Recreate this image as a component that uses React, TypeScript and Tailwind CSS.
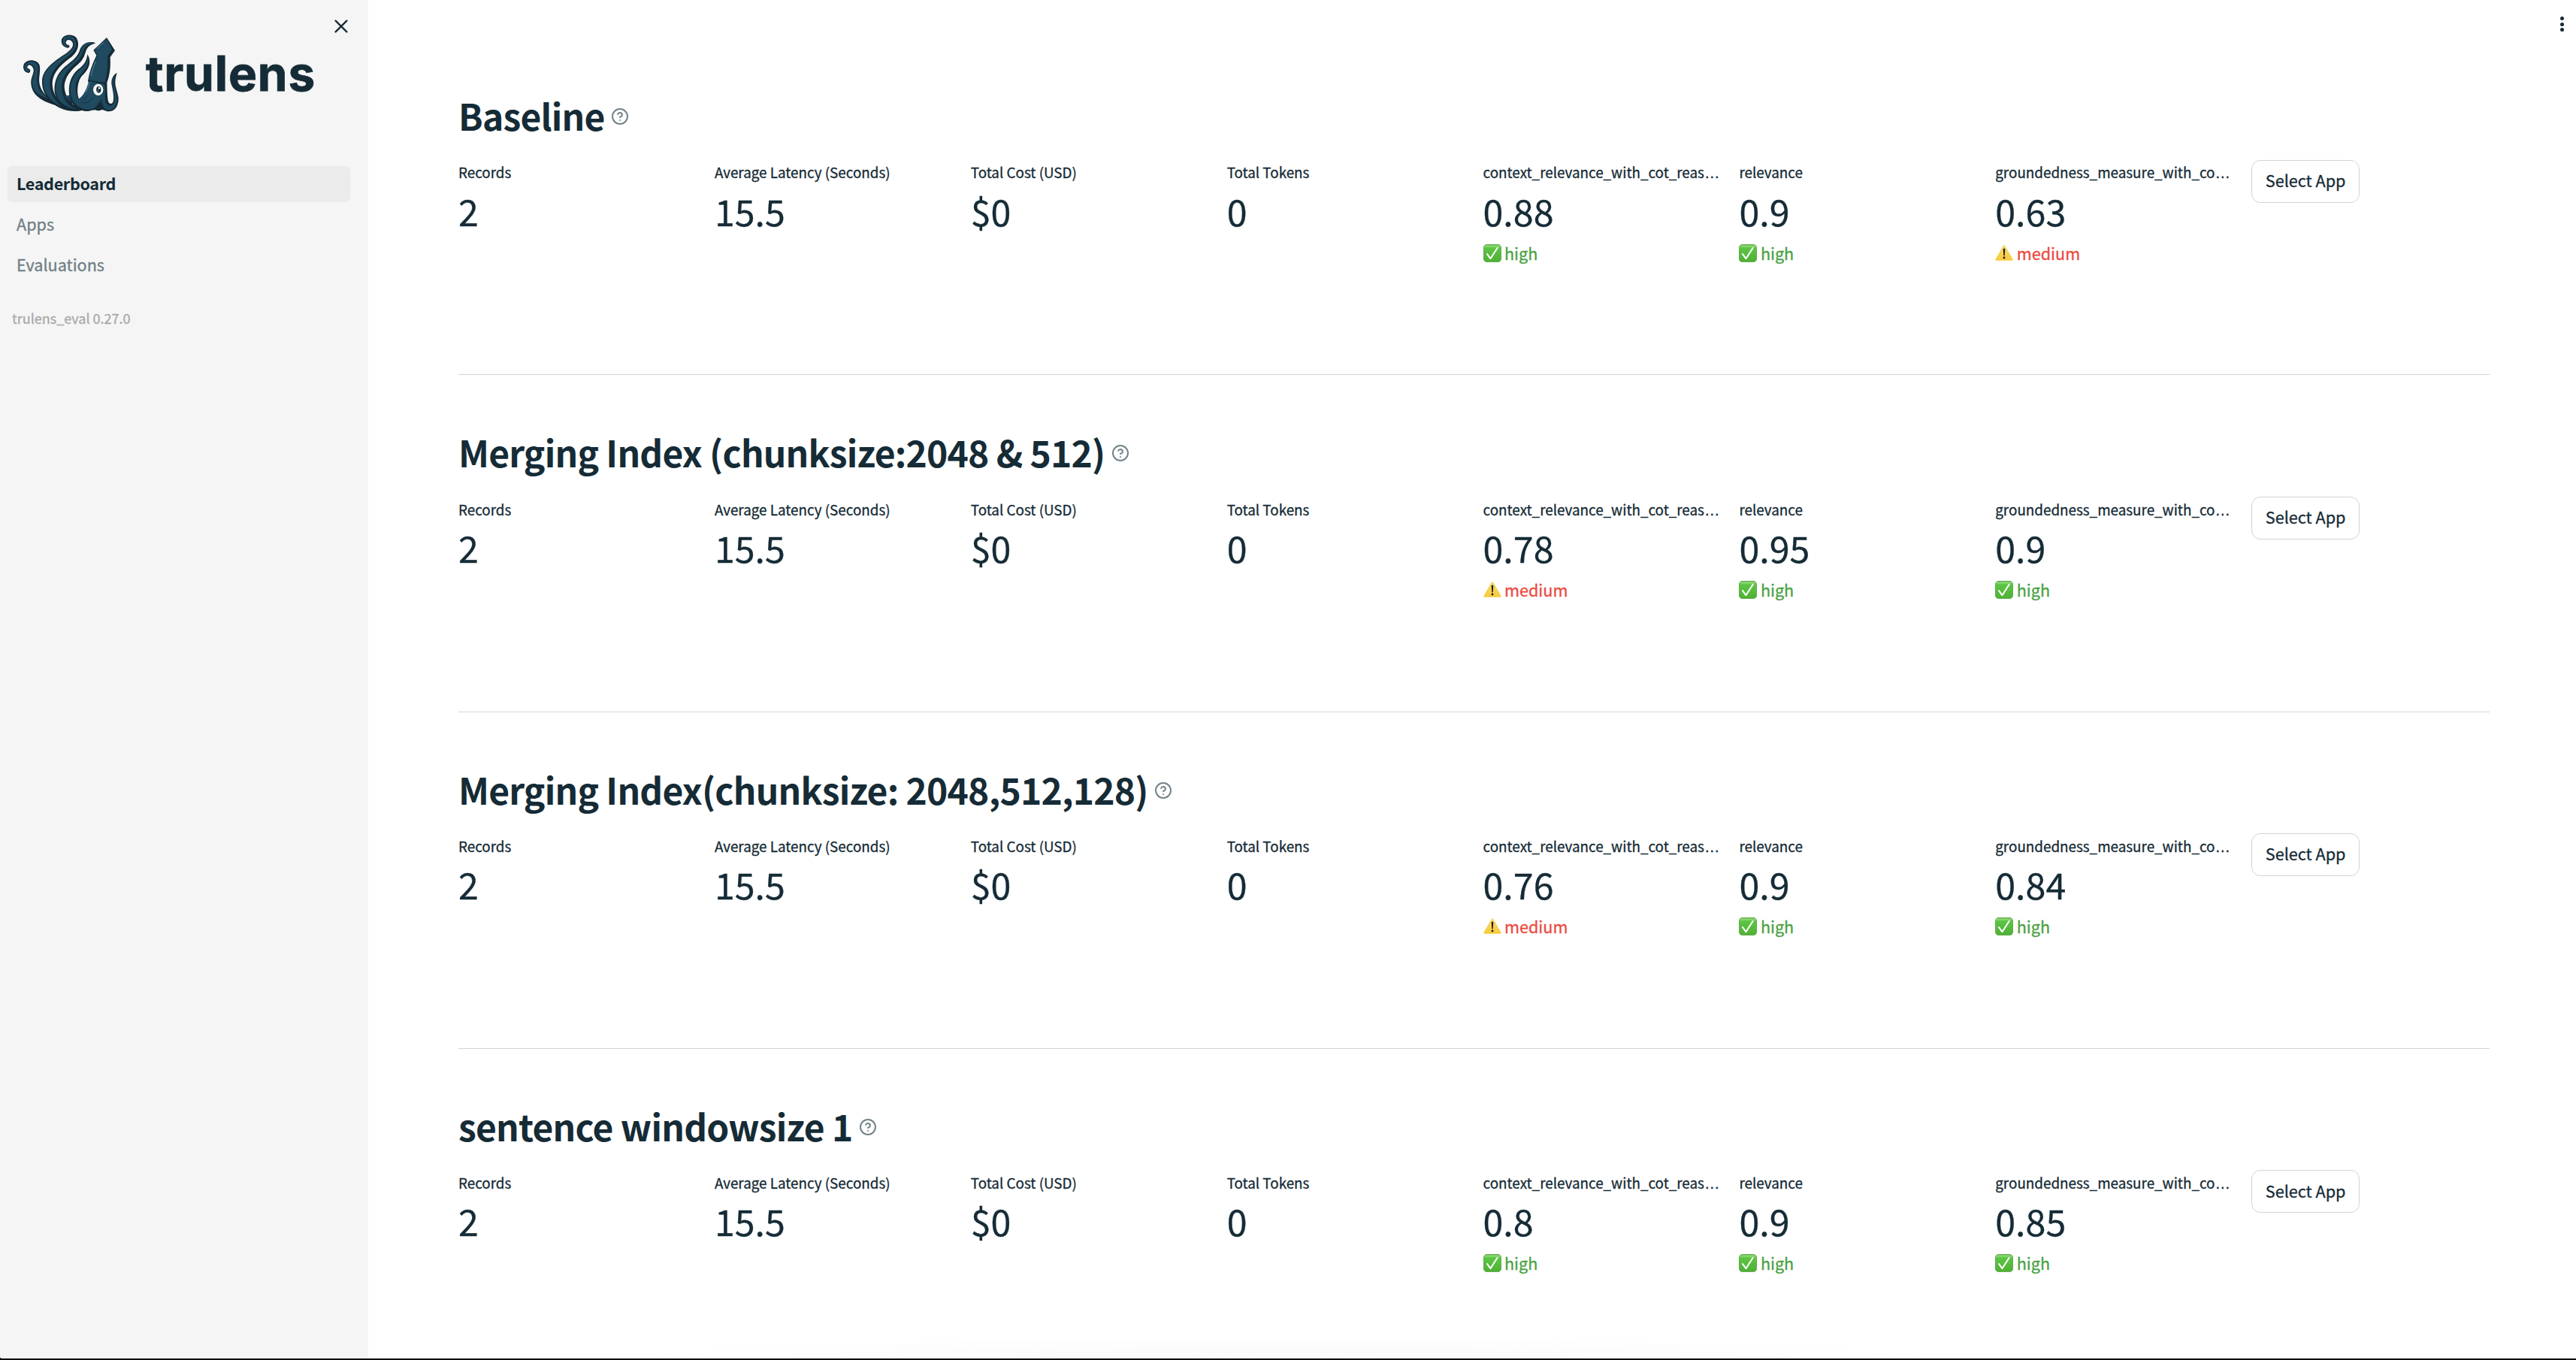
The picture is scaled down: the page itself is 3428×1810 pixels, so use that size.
type Level = "high" | "medium";

interface Metric {
  label: string;
  clipped?: boolean;
  value: string;
  level?: Level;
}

const usage: Metric[] = [
  { label: "Records", value: "2" },
  { label: "Average Latency (Seconds)", value: "15.5" },
  { label: "Total Cost (USD)", value: "$0" },
  { label: "Total Tokens", value: "0" },
];

const feedback = (
  context: [string, Level],
  relevance: [string, Level],
  groundedness: [string, Level],
): Metric[] => [
  { label: "context_relevance_with_cot_reas", clipped: true, value: context[0], level: context[1] },
  { label: "relevance", value: relevance[0], level: relevance[1] },
  { label: "groundedness_measure_with_co", clipped: true, value: groundedness[0], level: groundedness[1] },
];

const apps = [
  { name: "Baseline", scores: feedback(["0.88", "high"], ["0.9", "high"], ["0.63", "medium"]) },
  {
    name: "Merging Index (chunksize:2048 & 512)",
    scores: feedback(["0.78", "medium"], ["0.95", "high"], ["0.9", "high"]),
  },
  {
    name: "Merging Index(chunksize: 2048,512,128)",
    scores: feedback(["0.76", "medium"], ["0.9", "high"], ["0.84", "high"]),
  },
  { name: "sentence windowsize 1", scores: feedback(["0.8", "high"], ["0.9", "high"], ["0.85", "high"]) },
];

function SquidLogo() {
  return (
    <svg viewBox="0 0 450 390" className="h-[130px] w-[150px] shrink-0" aria-hidden="true">
      {/* shaded silhouettes */}
      <g fill="#152b36">
        <path d="M190 300L222 305L236 340L200 330Z" />
        <path d="M52 201C34 198 28 176 38 162C52 144 88 148 97 168C104 190 94 215 97 240C100 262 112 284 140 306C160 320 200 320 240 330L262 352C225 358 190 350 160 330C100 312 66 285 64 243C62 220 76 205 74 187C70 170 56 164 50 174C47 181 50 183 57 185C64 190 61 201 52 201Z" />
        <path d="M210 101C192 99 182 84 186 67C195 45 232 44 246 62C262 92 246 124 216 144C174 176 148 208 149 246C150 276 162 300 186 326L220 352C180 346 150 326 134 306C116 286 107 262 108 232C110 190 150 158 195 129C222 111 233 98 231 83C226 67 207 63 203 78C202 85 207 88 215 91C220 96 218 101 210 101Z" />
        <path d="M322 82C298 73 272 80 260 106C252 136 230 152 198 177C166 206 155 240 158 278C164 318 196 346 244 354L272 350C226 338 197 296 197 252C200 216 224 190 250 168C282 142 278 116 289 102C298 90 308 88 322 82Z" />
        <path d="M289 127C286 154 276 170 252 187C222 212 213 248 216 284C222 328 250 354 292 354C302 352 312 349 320 349C330 354 340 352 346 348L350 300L256 306C248 290 248 262 253 243C256 228 264 214 276 204C300 180 304 150 289 127Z" />
        <path d="M366 60L313 110L325 131C308 166 296 200 291 234L344 330C350 352 366 357 380 354C404 352 414 326 413 300C409 275 400 260 400 238C400 225 404 212 407 201C392 208 382 228 386 250C391 274 396 298 392 314C388 328 376 326 372 314C368 296 368 270 367 240C380 205 382 175 380 138L399 112Z" />
      </g>
      <g fill="#1f4a60">
        <path d="M51 196C37 192 34 176 42 165C54 151 84 153 90 172C96 192 86 216 89 241C92 266 106 286 134 303C98 294 72 276 69 245C67 221 81 205 79 185C74 165 54 159 47 171C44 181 49 186 55 188C58 192 57 197 51 196Z" />
        <path d="M209 97C195 95 187 83 191 69C199 50 229 49 240 68C251 94 237 118 207 138C165 170 138 204 139 245C140 280 154 304 184 336C130 308 112 270 112 233C114 192 152 160 198 132C226 114 239 98 235 81C229 61 205 58 199 76C198 87 205 91 213 94C215 96 213 98 209 97Z" />
        <path d="M316 80C294 76 274 84 265 107C257 139 234 154 202 180C171 208 160 240 163 277C169 314 194 338 248 348C204 332 186 294 186 250C190 210 216 184 242 160C270 136 270 114 282 96C292 84 304 83 316 80Z" />
        <path d="M290 136C289 157 280 173 256 191C227 214 218 250 221 283C227 320 254 347 292 347C316 346 328 336 336 314C342 334 354 350 378 349C400 347 408 324 407 300C404 277 393 260 393 238C393 228 396 218 400 210C390 220 386 234 390 252C395 274 400 298 396 318C390 338 370 336 362 318C358 300 362 270 357 246L294 233C288 262 274 292 253 306C243 292 239 262 244 240C248 226 258 212 269 200C288 178 297 158 290 136Z" />
        <path d="M365 65L317 110L329 131C312 167 300 202 294 230L358 241C368 206 371 175 369 134L388 108Z" />
      </g>
      {/* webbing between the inner arms */}
      <path d="M194 288C204 294 212 293 219 290L224 314C212 314 202 306 194 288Z" fill="#1f4a60" stroke="#152b36" strokeWidth="2" />
      <g fill="none" stroke="#152b36" strokeWidth="2.5" strokeLinecap="round">
        <path d="M294 230Q324 239 358 240M264 318Q292 330 308 304M274 306Q286 300 292 290M196 298Q208 306 222 304" />
      </g>
      <path d="M342 298C344 318 352 336 362 350C350 350 340 350 334 346C338 332 342 318 342 298Z" fill="#152b36" />
      <g fill="none" stroke="#5f929f" strokeWidth="2.5" strokeLinecap="round">
        <path d="M327 104L353 80M321 156Q308 184 304 212M296 242Q292 262 283 277" />
      </g>
      <ellipse cx="332" cy="268" rx="20" ry="23" fill="#fff" />
      <ellipse cx="334" cy="268" rx="9.5" ry="13" fill="#152b36" />
      <ellipse cx="331" cy="272" rx="3.5" ry="6" fill="#46606b" />
      <ellipse cx="336" cy="262" rx="3.5" ry="4" fill="#fff" />
    </svg>
  );
}

function CloseIcon() {
  return (
    <svg viewBox="0 0 18 18" className="size-[18px]" fill="none" stroke="#152b36" strokeWidth="2.3" strokeLinecap="round">
      <path d="M1.6 1.6l14.8 14.8M16.4 1.6L1.6 16.4" />
    </svg>
  );
}

function HelpIcon() {
  return (
    <svg
      viewBox="0 0 24 24"
      className="mt-[3px] ml-[8.5px] size-6 shrink-0"
      fill="none"
      stroke="#73838a"
      strokeWidth="2"
      strokeLinecap="round"
      strokeLinejoin="round"
    >
      <circle cx="12" cy="12" r="10" />
      <path d="M9.09 9a3 3 0 0 1 5.83 1c0 2-3 3-3 3" />
      <path d="M12 17h.01" />
    </svg>
  );
}

function CheckMark() {
  return (
    <svg viewBox="0 0 24 24" className="size-6">
      <defs>
        <linearGradient id="check-fill" x1="0" y1="0" x2="0" y2="1">
          <stop offset="0" stopColor="#58a63f" />
          <stop offset="0.08" stopColor="#93dc78" />
          <stop offset="0.2" stopColor="#5cc544" />
          <stop offset="1" stopColor="#4fb035" />
        </linearGradient>
      </defs>
      <rect x="0.4" y="0.4" width="23.2" height="23.2" rx="4.4" fill="url(#check-fill)" stroke="#4a9c35" strokeWidth="0.8" />
      <path d="M5 13.2l4.400 6L18.600 5" fill="none" stroke="#fff" strokeWidth="2.1" strokeLinecap="round" strokeLinejoin="round" />
    </svg>
  );
}

function Warning() {
  return (
    <svg viewBox="0 0 24 24" className="size-6">
      <defs>
        <linearGradient id="warn-fill" x1="0" y1="0" x2="0" y2="1">
          <stop offset="0" stopColor="#f6d873" />
          <stop offset="1" stopColor="#f7cb3a" />
        </linearGradient>
      </defs>
      <path d="M12 1.200c.6 0 1 .3 1.300.9l10.200 17.900c.5 1 0 1.700-1 1.700H1.500c-1 0-1.500-.7-1-1.700L10.700 2.100c.3-.6.700-.9 1.300-.9z" fill="url(#warn-fill)" />
      <path d="M12 5.800c1 0 1.300.5 1.200 1.400l-.5 7.500c-.1 1-1.300 1-1.400 0l-.5-7.500c-.1-.9.2-1.400 1.200-1.400z" fill="#1c1a12" />
      <circle cx="12" cy="18" r="1.400" fill="#1c1a12" />
    </svg>
  );
}

function MetricCell({ metric }: { metric: Metric }) {
  return (
    <div className="min-w-0 pt-[1.7px]">
      <div className="h-[30px] text-[18.83px] leading-[30px] whitespace-nowrap">
        {metric.label}
        {metric.clipped && <span className="font-['Liberation_Sans',sans-serif] text-[20.5px] leading-none">…</span>}
      </div>
      <div className="mt-[3.3px] h-16 text-[48.4px] leading-16">{metric.value}</div>
      {metric.level && (
        <div
          className={
            metric.level === "high"
              ? "mt-[7px] flex h-9 items-center text-[#4aa244]"
              : "mt-[7px] flex h-9 items-center text-[#ec4a3f]"
          }
        >
          {metric.level === "high" ? <CheckMark /> : <Warning />}
          <span className="ml-[4.5px] text-[21.6px] leading-9">{metric.level}</span>
        </div>
      )}
    </div>
  );
}

function AppSection({ name, scores }: { name: string; scores: Metric[] }) {
  return (
    <section className="flex h-[448.3px] shrink-0 flex-col border-b border-[#d0d5d7] pt-[70px]">
      <h2 className="flex h-[65px] items-center text-[48px] leading-[65px] font-bold tracking-[-0.8px] whitespace-nowrap [-webkit-text-stroke:0px]">
        {name}
        <HelpIcon />
      </h2>
      <div className="mt-[26.5px] grid grid-cols-8 gap-6">
        {[...usage, ...scores].map((metric) => (
          <MetricCell key={metric.label} metric={metric} />
        ))}
        <div>
          <button className="flex h-[57px] w-[144px] items-center justify-center rounded-xl border border-[#d0d5d7] bg-white pb-0.5 text-[21.6px] whitespace-nowrap">
            Select App
          </button>
        </div>
      </div>
    </section>
  );
}

export default function App() {
  return (
    <div className="flex h-[1810px] w-[3428px] flex-col overflow-hidden bg-black font-['Noto_Sans_CJK_SC',sans-serif] text-[#152b36] [-webkit-text-stroke:0.3px]">
      <div className="flex h-[1808px] overflow-hidden rounded-bl-[3px] bg-white">
        <aside className="flex w-[490px] shrink-0 flex-col bg-[#f5f5f5]">
          <div className="flex h-[221px] items-start">
            <div className="mt-[30px] ml-5">
              <SquidLogo />
            </div>
            <div className="mt-[58px] ml-6 w-[250px] font-['Inter',sans-serif] text-[64px] leading-[80px] font-bold tracking-[0.8px] [-webkit-text-stroke:0.8px]">
              trulens
            </div>
            <button className="mt-[26px] ml-px" aria-label="Close sidebar">
              <CloseIcon />
            </button>
          </div>
          <nav className="ml-2.5 flex w-[456px] flex-col gap-1.5 text-[21.6px] leading-[46px]">
            <a className="h-12 rounded-md bg-[#ebebeb] pl-3 font-bold tracking-[-0.35px] [-webkit-text-stroke:0px]">Leaderboard</a>
            <a className="h-12 pl-3 text-[#6f7f86]">Apps</a>
            <a className="h-12 pl-3 text-[#6f7f86]">Evaluations</a>
          </nav>
          <div className="mt-[32px] ml-4 text-[18px] leading-7 text-[#a8a9aa]">trulens_eval 0.27.0</div>
        </aside>
        <main className="relative flex min-w-0 grow flex-col overflow-hidden pt-[51.1px] pr-[115px] pl-[120px]">
          {apps.map((app) => (
            <AppSection key={app.name} name={app.name} scores={app.scores} />
          ))}
          <div className="absolute top-[14px] right-[9px] flex h-[34px] w-5 flex-col items-center justify-center gap-[2.5px] pt-0.5">
            <span className="size-[5px] rounded-full bg-[#152b36]" />
            <span className="size-[5px] rounded-full bg-[#152b36]" />
            <span className="size-[5px] rounded-full bg-[#152b36]" />
          </div>
          <div className="absolute bottom-0 left-[300px] h-[30px] w-[1850px] bg-[radial-gradient(ellipse_50%_100%_at_50%_100%,rgba(0,0,0,0.025),transparent)]" />
        </main>
      </div>
    </div>
  );
}
